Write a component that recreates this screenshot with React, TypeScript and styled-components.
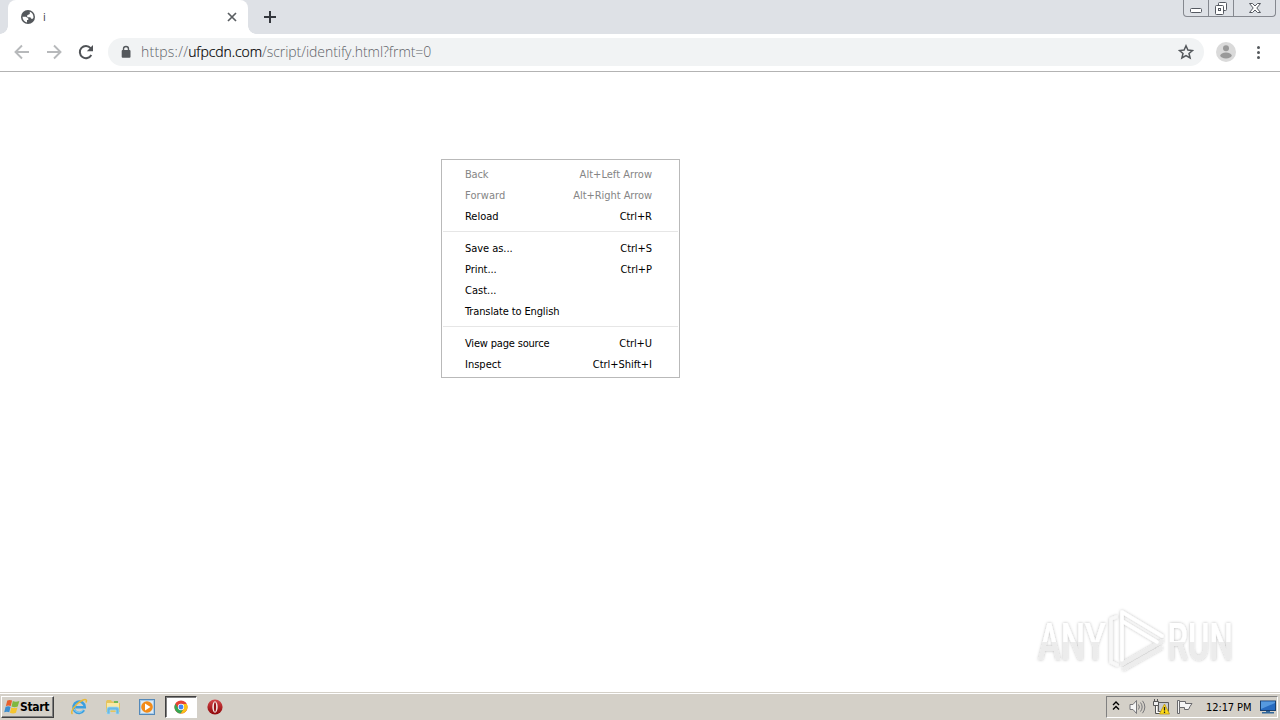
import React from "react";
import styled, { createGlobalStyle } from "styled-components";

const GlobalStyle = createGlobalStyle`
  * { box-sizing: border-box; }
  html, body { margin: 0; padding: 0; overflow: hidden; }
  body { background: #fff; font-family: "DejaVu Sans Condensed", "DejaVu Sans", Tahoma, sans-serif; font-size: 11px; color: #000; }
  svg { display: block; flex: none; }
`;

const Screen = styled.div`
  width: 1280px;
  height: 720px;
  display: flex;
  flex-direction: column;
  position: relative;
  background: #fff;
`;

const TabStrip = styled.header`
  height: 34px;
  flex: none;
  display: flex;
  background: #dee1e6;
  padding-left: 8px;
`;

const Tab = styled.div`
  width: 240px;
  height: 34px;
  background: #fff;
  border-radius: 8px 8px 0 0;
  display: flex;
  align-items: center;
  padding: 0 10px 0 13px;
  position: relative;
  &::before, &::after {
    content: "";
    position: absolute;
    bottom: 0;
    width: 8px;
    height: 8px;
  }
  &::before { left: -8px; background: radial-gradient(circle at 0 0, transparent 7.5px, #fff 8px); }
  &::after { right: -8px; background: radial-gradient(circle at 100% 0, transparent 7.5px, #fff 8px); }
`;

const TabTitle = styled.span`
  flex: 1;
  margin-left: 8px;
  color: #3c4043;
`;

const NewTab = styled.div`
  width: 44px;
  display: flex;
  align-items: center;
  justify-content: center;
`;

const WindowControls = styled.div`
  margin-left: auto;
  margin-right: 4px;
  width: 93px;
  height: 17px;
  display: flex;
  border: 1px solid #85888f;
  border-top: 0;
  border-radius: 0 0 4px 4px;
`;

const WindowButton = styled.div<{ $width: number }>`
  width: ${(p) => p.$width}px;
  display: flex;
  justify-content: center;
  & + & { border-left: 1px solid #85888f; }
`;

const Toolbar = styled.div`
  height: 38px;
  flex: none;
  display: flex;
  align-items: center;
  border-bottom: 1px solid #b3b3b3;
  padding: 0 14px 1px;
`;

const NavButtons = styled.div`
  display: flex;
  gap: 16px;
  width: 94px;
`;

const AddressBar = styled.div`
  width: 1096px;
  height: 28px;
  border-radius: 14px;
  background: #f1f3f4;
  display: flex;
  align-items: center;
  padding: 0 10px 0 12px;
`;

const Url = styled.span`
  flex: 1;
  margin-left: 9px;
  font: 300 14px/20px "Open Sans", "Noto Sans", sans-serif;
  letter-spacing: -0.05px;
  color: #5f6368;
  white-space: nowrap;
`;

const Scheme = styled.span`
  letter-spacing: 0.22px;
`;

const Host = styled.span`
  color: #000;
  letter-spacing: -0.08px;
  -webkit-text-stroke: 0.2px #000;
`;

const ToolbarEnd = styled.div`
  display: flex;
  align-items: center;
  gap: 14px;
  margin-left: 12px;
`;

const Page = styled.main`
  flex: 1;
  background: #fff;
`;

const Menu = styled.div`
  position: absolute;
  left: 441px;
  top: 159px;
  width: 239px;
  border: 1px solid #b9b9b9;
  background: #fff;
  padding: 4px 1px 2px;
`;

const MenuRow = styled.div<{ $disabled?: boolean }>`
  height: 21px;
  display: flex;
  align-items: center;
  justify-content: space-between;
  padding: 0 26px 0 22px;
  color: ${(p) => (p.$disabled ? "#858585" : "#000")};
`;

const Label = styled.span<{ $spacing: number }>`
  white-space: nowrap;
  line-height: 21px;
  letter-spacing: ${(p) => p.$spacing}px;
  margin-right: ${(p) => -p.$spacing}px;
`;

const Separator = styled.div`
  height: 11px;
  padding-top: 4px;
  &::before { content: ""; display: block; height: 1px; background: #e6e6e6; }
`;

const Watermark = styled.div`
  position: absolute;
  left: 1030px;
  top: 600px;
`;

const Taskbar = styled.footer`
  height: 28px;
  flex: none;
  display: flex;
  align-items: center;
  background: #d4d0c8;
  border-top: 1px solid #d4d0c8;
  box-shadow: inset 0 1px #fff;
  padding: 2px 2px 2px 1px;
`;

const StartButton = styled.div`
  width: 53px;
  height: 22px;
  display: flex;
  align-items: center;
  padding-left: 2px;
  border: 1px solid;
  border-color: #fff #404040 #404040 #fff;
  box-shadow: inset -1px -1px #808080;
  font-weight: bold;
  font-size: 12px;
  letter-spacing: -0.35px;
  white-space: nowrap;
`;

const QuickLaunch = styled.div`
  display: flex;
  margin-left: 9px;
`;

const TaskItem = styled.div<{ $active?: boolean }>`
  width: 32px;
  height: 22px;
  margin-right: 2px;
  display: flex;
  align-items: center;
  justify-content: center;
  border: 1px solid;
  border-color: ${(p) => (p.$active ? "#404040 #fff #fff #404040" : "transparent")};
  background: ${(p) => (p.$active ? "#fff" : "none")};
  box-shadow: ${(p) => (p.$active ? "inset 1px 1px #808080" : "none")};
`;

const Tray = styled.div`
  margin-left: auto;
  width: 172px;
  height: 22px;
  display: flex;
  align-items: center;
  border: 1px solid;
  border-color: #808080 #fff #fff #808080;
  padding-left: 5px;
`;

const TraySlot = styled.div<{ $width: number }>`
  width: ${(p) => p.$width}px;
`;

const Clock = styled.span`
  width: 54px;
  padding-top: 1px;
  letter-spacing: -0.1px;
  white-space: nowrap;
`;

type Entry = { label: string; ls: number; keys?: string; ks?: number; disabled?: boolean };

const groups: Entry[][] = [
  [
    { label: "Back", ls: -0.2, keys: "Alt+Left Arrow", ks: 0.03, disabled: true },
    { label: "Forward", ls: 0.1, keys: "Alt+Right Arrow", ks: -0.06, disabled: true },
    { label: "Reload", ls: -0.02, keys: "Ctrl+R", ks: -0.08 },
  ],
  [
    { label: "Save as...", ls: -0.05, keys: "Ctrl+S", ks: -0.1 },
    { label: "Print...", ls: -0.06, keys: "Ctrl+P", ks: -0.08 },
    { label: "Cast...", ls: 0 },
    { label: "Translate to English", ls: -0.12 },
  ],
  [
    { label: "View page source", ls: -0.18, keys: "Ctrl+U", ks: -0.1 },
    { label: "Inspect", ls: 0, keys: "Ctrl+Shift+I", ks: -0.04 },
  ],
];

const Globe = () => (
  <svg width="14" height="14" viewBox="0 0 14 14">
    <circle cx="7" cy="7" r="7" fill="#54585c" />
    <path d="M1.500 6.800H5L7.300 8.600V10H6V12.400C3.500 12 1.500 9.800 1.500 6.800ZM8.800 1.700C11 2.300 12.600 4.500 12.500 7.400L11.800 8.800H10.200L9.300 7.200H6.200V5.200L8.800 4Z" fill="#fff" />
  </svg>
);

const Arrow = ({ forward }: { forward?: boolean }) => (
  <svg width="16" height="16" viewBox="0 0 16 16" fill="none" stroke="#b7b9bb" strokeWidth="1.9">
    <path d={forward ? "M1 8H14M8 1.500 14.500 8 8 14.500" : "M15 8H2M8 1.500 1.500 8 8 14.500"} />
  </svg>
);

const Reload = () => (
  <svg width="16" height="16" viewBox="0 0 16 16">
    <path d="M13.300 11A6.100 6.100 0 1 1 12.600 4.100" fill="none" stroke="#505357" strokeWidth="2" />
    <path d="M15 1V7.200H8.800Z" fill="#505357" />
  </svg>
);

const Lock = () => (
  <svg width="12" height="14" viewBox="0 0 12 14">
    <path d="M3.500 6V4a2.500 2.500 0 0 1 5 0V6" fill="none" stroke="#54585c" strokeWidth="1.400" />
    <rect x="1.700" y="5" width="8.800" height="7.800" rx="1" fill="#54585c" />
  </svg>
);

const WindowsFlag = () => (
  <svg width="16" height="16" viewBox="0 0 17 16">
    <path d="M3.500 1.200Q6 -.3 8.600 1.200L7.200 7Q4.500 5.800 2 7Z" fill="#e8602c" />
    <path d="M9.400 1.700Q12.300 3.300 16.300 1.700L14.600 7.600Q11 8.900 8 7.500Z" fill="#7fb840" />
    <path d="M1.700 7.800Q4.500 6.600 7 7.800L5.600 13.600Q3 12.400.2 13.600Z" fill="#3c8ed0" />
    <path d="M7.800 8.400Q10.700 9.800 14.300 8.500L12.700 14.200Q9.500 15.600 6.300 14.100Z" fill="#f5c52f" />
  </svg>
);

const Explorer = () => (
  <svg width="18" height="18" viewBox="0 0 18 18" fill="none">
    <path d="M14 12.200A5.700 5.700 0 1 1 14.800 9.300H5.200" stroke="#3b9fe0" strokeWidth="2.500" />
    <path d="M13.400 11.800A5.200 5.200 0 0 1 4 11" stroke="#8ad4f6" strokeWidth="1" />
    <path d="M2.500 16C-.5 14 6 5 12.500 2.200 16 .7 17.500 1.800 15.800 4.500" stroke="#e9b936" strokeWidth="1.500" />
  </svg>
);

const Folder = () => (
  <svg width="18" height="18" viewBox="0 0 18 18">
    <path d="M2 3.500 3 2H7L8 3.500H14V5H16V14H2Z" fill="#e6c45d" />
    <path d="M3 5H15V12H3Z" fill="#f9e9a5" />
    <path d="M10 3H14V5H10Z" fill="#71b956" />
    <path d="M3 16V11Q3 9 5 9H13Q15 9 15 11V16H12V12H6V16Z" fill="#69b9e5" stroke="#a5dbf5" strokeWidth=".7" />
  </svg>
);

const MediaPlayer = () => (
  <svg width="16" height="16" viewBox="0 0 16 16">
    <rect x=".5" y=".5" width="15" height="15" fill="#a7cbe9" stroke="#5489b9" />
    <rect x="2" y="2" width="12" height="12" fill="#dceaf5" />
    <circle cx="8" cy="8" r="5.800" fill="#f28b18" />
    <path d="M6 4.500 11.500 8 6 11.500Z" fill="#fff" />
  </svg>
);

const Chrome = () => (
  <svg width="14" height="14" viewBox="0 0 16 16">
    <circle cx="8" cy="8" r="7.500" fill="#e54335" />
    <path d="M8 4.500H14.600A7.500 7.500 0 0 1 7.500 15.500L11 9.800Z" fill="#fbc116" />
    <path d="M1.500 4.250 5 9.800 8 11.500H10L7.500 15.500A7.500 7.500 0 0 1 1.500 4.250Z" fill="#34a853" />
    <circle cx="8" cy="8" r="3.600" fill="#fff" />
    <circle cx="8" cy="8" r="2.800" fill="#4285f4" />
  </svg>
);

const Opera = () => (
  <svg width="16" height="16" viewBox="0 0 16 16">
    <defs><linearGradient id="opera" x2="0" y2="1"><stop stopColor="#d5484b" /><stop offset="1" stopColor="#8e0508" /></linearGradient></defs>
    <circle cx="8" cy="8" r="7.600" fill="url(#opera)" />
    <ellipse cx="8" cy="8" rx="2.700" ry="5.700" fill="#f3e8e5" />
    <ellipse cx="8" cy="8" rx="1.100" ry="4.700" fill="#981316" />
  </svg>
);

const Speaker = () => (
  <svg width="17" height="16" viewBox="0 0 17 16" fill="none" stroke="#77777a">
    <path d="M1 5.500H4L7.500 1.500V14.500L4 10.500H1Z" fill="#f5f5f5" />
    <path d="M9.500 5.500Q11.300 8 9.500 10.500M11.500 3.500Q14.800 8 11.500 12.500M13.500 1.800Q18.200 8 13.500 14.200" />
  </svg>
);

const Network = () => (
  <svg width="17" height="16" viewBox="0 0 17 16">
    <path d="M5.500 3.500H15.500V12.500H5.500Z" fill="#c8cbd0" stroke="#5b5b5b" />
    <path d="M.5 2.500H5.500V6.500H.5ZM1.500 0V2.500M4.500 0V2.500" fill="#eee" stroke="#555" />
    <path d="M2.500 7V14.500H8.500" fill="none" stroke="#555" />
    <path d="M3.500 7V13.500H8" fill="none" stroke="#fff" />
    <path d="M11.500 5 16.500 15H6.500Z" fill="#ffdc18" stroke="#b79314" strokeWidth=".8" />
    <path d="M11.500 8V11.500M11.500 12.500V14" stroke="#222" strokeWidth="1.300" />
  </svg>
);

const Flag = () => (
  <svg width="17" height="16" viewBox="0 0 17 16" fill="#f5f5f5" stroke="#69696c">
    <path d="M.5 1.500H2.500V14.500H.5Z" />
    <path d="M2.500 2.500H8.500V4.500H15L13 7.500 11.500 10.500H7.500V8.500H2.500Z" />
  </svg>
);

const Monitor = () => (
  <svg width="16" height="14" viewBox="0 0 16 14">
    <rect x=".5" y="1" width="15" height="9.500" fill="#286bc0" stroke="#183f70" />
    <path d="M1 1.500H15V3L1 9Z" fill="#5699df" />
    <path d="M6 11H10V12H14V13.500H2V12H6Z" fill="#31679a" />
  </svg>
);

const AnyRunLogo = () => (
  <svg width="230" height="90" viewBox="0 0 230 90" overflow="visible">
    <defs>
      <linearGradient id="mark" gradientUnits="userSpaceOnUse" x1="0" y1="-38" x2="0" y2="0">
        <stop offset=".53" stopColor="#fff" /><stop offset=".54" stopColor="#ececec" />
      </linearGradient>
      <filter id="glow" x="-20%" y="-20%" width="140%" height="140%">
        <feDropShadow dx="0" dy="0" stdDeviation="1.800" floodColor="#000" floodOpacity=".28" />
      </filter>
    </defs>
    <g filter="url(#glow)">
      <g fill="url(#mark)" fontFamily="Roboto, sans-serif" fontSize="52" fontWeight="500">
        <text transform="translate(8 59.500) scale(.66 1)">ANY</text>
        <text transform="translate(137.500 59.500) scale(.63 1)">RUN</text>
      </g>
      <g fill="none" strokeWidth="3.500" strokeLinejoin="round" strokeLinecap="round">
        <path d="M132 41 92 64" stroke="#ededed" />
        <path d="M94 69 131 48" stroke="#ededed" />
        <path d="M92 60V12L132 36" stroke="#fff" />
        <path d="M92 21 127 42" stroke="#fff" />
        <path d="M86 17 81 19V62L87 65" stroke="#f8f8f8" />
      </g>
    </g>
  </svg>
);

export default function App() {
  return (
    <Screen>
      <GlobalStyle />
      <TabStrip>
        <Tab>
          <Globe />
          <TabTitle>i</TabTitle>
          <svg width="12" height="12" viewBox="0 0 12 12"><path d="M2 2 10 10M10 2 2 10" stroke="#5a5e62" strokeWidth="1.700" /></svg>
        </Tab>
        <NewTab>
          <svg width="12" height="12" viewBox="0 0 12 12"><path d="M6 0V12M0 6H12" stroke="#34373d" strokeWidth="2" /></svg>
        </NewTab>
        <WindowControls>
          <WindowButton $width={24}>
            <svg width="14" height="16" viewBox="0 0 14 16"><rect x="1.500" y="8.500" width="11" height="4" rx="1" fill="#fff" stroke="#555961" /></svg>
          </WindowButton>
          <WindowButton $width={25}>
            <svg width="14" height="16" viewBox="0 0 14 16" fill="#fff" stroke="#555961"><rect x="4.500" y="2.500" width="8" height="8" rx="1" /><rect x="1.500" y="5.500" width="8" height="9" rx="1" /><rect x="4.500" y="8.500" width="2" height="2" /></svg>
          </WindowButton>
          <WindowButton $width={42}>
            <svg width="14" height="16" viewBox="0 0 14 16"><path d="M1.500 3.500H4.500L7 6L9.500 3.500H12.500L8.800 8L12.500 12.500H9.500L7 10L4.500 12.500H1.500L5.200 8Z" fill="#fff" stroke="#555961" /></svg>
          </WindowButton>
        </WindowControls>
      </TabStrip>
      <Toolbar>
        <NavButtons><Arrow /><Arrow forward /><Reload /></NavButtons>
        <AddressBar>
          <Lock />
          <Url><Scheme>https://</Scheme><Host>ufpcdn.com</Host>/script/identify.html?frmt=0</Url>
          <svg width="16" height="16" viewBox="0 0 16 16"><path d="M8 1.800 9.900 6.100 14.500 6.500 11 9.500 12.100 14 8 11.600 3.900 14 5 9.500 1.500 6.500 6.100 6.100Z" fill="none" stroke="#54585c" strokeWidth="1.500" /></svg>
        </AddressBar>
        <ToolbarEnd>
          <svg width="20" height="20" viewBox="0 0 20 20"><circle cx="10" cy="10" r="10" fill="#dadada" /><circle cx="10" cy="6.200" r="3" fill="#999" /><ellipse cx="10" cy="13.500" rx="5.700" ry="3" fill="#999" /></svg>
          <svg width="16" height="16" viewBox="0 0 16 16" fill="#54585c"><circle cx="8.500" cy="3.500" r="1.500" /><circle cx="8.500" cy="8.500" r="1.500" /><circle cx="8.500" cy="13.500" r="1.500" /></svg>
        </ToolbarEnd>
      </Toolbar>
      <Page />
      <Taskbar>
        <StartButton><WindowsFlag />Start</StartButton>
        <QuickLaunch>
          <TaskItem><Explorer /></TaskItem>
          <TaskItem><Folder /></TaskItem>
          <TaskItem><MediaPlayer /></TaskItem>
          <TaskItem $active><Chrome /></TaskItem>
          <TaskItem><Opera /></TaskItem>
        </QuickLaunch>
        <Tray>
          <TraySlot $width={17}>
            <svg width="8" height="12" viewBox="0 0 8 12" fill="none" stroke="#000" strokeWidth="1.400"><path d="M1 4 4 1 7 4M1 8.500 4 5.500 7 8.500" /></svg>
          </TraySlot>
          <TraySlot $width={24}><Speaker /></TraySlot>
          <TraySlot $width={24}><Network /></TraySlot>
          <TraySlot $width={29}><Flag /></TraySlot>
          <Clock>12:17 PM</Clock>
          <Monitor />
        </Tray>
      </Taskbar>
      <Menu>
        {groups.map((group, i) => (
          <React.Fragment key={i}>
            {i > 0 && <Separator />}
            {group.map((e) => (
              <MenuRow key={e.label} $disabled={e.disabled}>
                <Label $spacing={e.ls}>{e.label}</Label>
                {e.keys && <Label $spacing={e.ks ?? 0}>{e.keys}</Label>}
              </MenuRow>
            ))}
          </React.Fragment>
        ))}
      </Menu>
      <Watermark><AnyRunLogo /></Watermark>
    </Screen>
  );
}
